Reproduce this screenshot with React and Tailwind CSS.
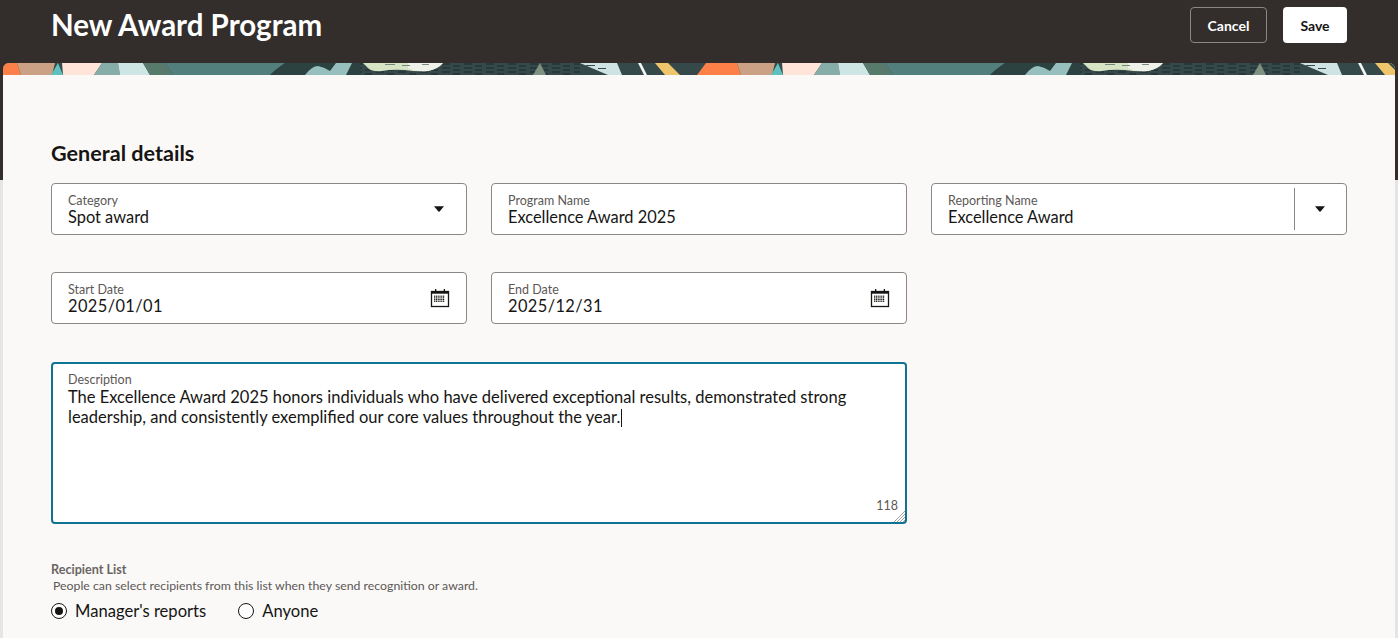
import React from 'react'

const font = 'font-["Lato",sans-serif]'

function BannerTile() {
    return (
        <g>
            <rect x="0" y="0" width="720" height="12" fill="#35494a" />
            <polygon points="-23,12 -14,0 17,0 21,12" fill="#fc8047" />
            <polygon points="17,0 55,0 52,12 21,12" fill="#cba185" />
            <polygon points="58,0 51,12 63,12" fill="#5fc1be" />
            <polygon points="62,0 102,0 94,12 63,12" fill="#ffe4d9" />
            <path d="M102 0 L118 0 L120 12 L94 12 Z" fill="#87ada9" />
            <path d="M118 0 L143 0 L150 12 L120 12 Z" fill="#cde6e3" />
            <path d="M143 0 L165 0 L173 12 L150 12 Z" fill="#587a6d" />
            <path d="M165 0 L285 0 Q276 6 270 12 L173 12 Z" fill="#527e7b" />
            <path d="M285 0 L360 0 L360 12 L270 12 Q276 6 285 0 Z" fill="#2b4240" />
            <path d="M305 12 Q312 3 318 3 Q324 4 330 8 L336 0 L352 0 L346 12 Z" fill="#97bfbd" />
            <rect x="360" y="0" width="220" height="12" fill="url(#dashes)" />
            <path d="M363 0 L443 0 Q438 6 428 8 Q416 9 405 7 Q392 6 382 8 Q372 9 368 5 Z" fill="#d6e4c5" />
            <path d="M408 0 L443 0 Q438 6 428 8 Q416 9 408 5 Z" fill="#eef2ea" />
            <rect x="385" y="1" width="10" height="1" fill="#6f8a78" />
            <rect x="402" y="2" width="8" height="1" fill="#6f8a78" />
            <rect x="422" y="1" width="7" height="1" fill="#7c8a80" />
            <polygon points="540,0 533,12 546,12" fill="#7f9180" />
            <polygon points="580,0 617,0 622,12 608,12" fill="#cfe4e2" />
            <rect x="586" y="2" width="9" height="1" fill="#35494a" />
            <rect x="598" y="5" width="8" height="1" fill="#35494a" />
            <polygon points="638,0 641,0 647,12 644,12" fill="#f4f5f0" />
            <polygon points="655,0 668,0 680,12 665,12" fill="#efc56b" />
        </g>
    )
}

function Banner() {
    return (
        <svg width="1392" height="12" viewBox="0 0 1392 12" className="block">
            <defs>
                <pattern id="dashes" width="22" height="4" patternUnits="userSpaceOnUse">
                    <rect x="0" y="0" width="22" height="4" fill="#35494a" />
                    <rect x="2" y="0.5" width="8" height="1" fill="#18282a" />
                    <rect x="13" y="2.5" width="7" height="1" fill="#18282a" />
                </pattern>
                <g id="tile"><BannerTile /></g>
            </defs>
            <use href="#tile" x="-3" />
            <use href="#tile" x="717" />
        </svg>
    )
}

function Caret() {
    return (
        <svg width="10" height="6" viewBox="0 0 10 6" className="block shrink-0">
            <path d="M0 0.3 H10 L5.6 5.4 Q5 6 4.4 5.4 Z" fill="#161513" />
        </svg>
    )
}

function CalendarIcon() {
    const cells = []
    for (let r = 0; r < 4; r++) {
        for (let c = 0; c < 6; c++) {
            cells.push(<rect key={`${r}-${c}`} x={4 + c * 1.8} y={7.6 + r * 1.7} width="1.2" height="1.2" fill="#161513" />)
        }
    }
    return (
        <svg width="20" height="20" viewBox="0 0 20 20" className="block shrink-0">
            <rect x="1.5" y="3.5" width="17" height="15" fill="none" stroke="#161513" strokeWidth="1.3" />
            <rect x="1.5" y="3.5" width="17" height="2.2" fill="#161513" />
            <rect x="5" y="1" width="1.3" height="4" fill="#161513" />
            <rect x="13.7" y="1" width="1.3" height="4" fill="#161513" />
            {cells}
        </svg>
    )
}

function Field({ label, value, children, digits }) {
    return (
        <div className="flex h-[52px] items-center rounded-[4px] border border-[#8b8785] bg-white pl-4">
            <div className="min-w-0 flex-1 self-start pt-[10px]">
                <div className="h-[13px] text-[12.5px] leading-[14px] text-[#5c5856]">{label}</div>
                <div className={`text-[16.4px] leading-[19px] text-[#161513] ${digits ? 'tracking-[0.4px]' : ''}`}>{value}</div>
            </div>
            {children}
        </div>
    )
}

function Radio({ label, checked }) {
    return (
        <div className="flex items-center gap-2">
            <span className="flex size-4 items-center justify-center rounded-full border border-[#161513] bg-white">
                {checked && <span className="size-2 rounded-full bg-[#161513]" />}
            </span>
            <span className="text-[16.6px] leading-5 text-[#161513]">{label}</span>
        </div>
    )
}

export default function App() {
    return (
        <div className={`h-screen overflow-hidden bg-[linear-gradient(#332e2b_180px,#e6e5e3_180px)] px-[3px] ${font}`}>
            {/* Header */}
            <div className="flex h-[63px] items-start justify-between pl-12 pr-12">
                <h1 className="mt-[5px] text-[29.5px] leading-10 font-bold text-white">New Award Program</h1>
                <div className="mt-[7px] flex gap-4">
                    <button className="h-9 w-[77px] rounded-[4px] border border-[#8b8785] text-[14px] font-bold text-white">Cancel</button>
                    <button className="h-9 w-16 rounded-[4px] bg-white text-[14px] font-bold text-[#161513]">Save</button>
                </div>
            </div>

            {/* Card */}
            <div className="h-[575px] overflow-hidden rounded-t-md bg-[#faf9f7]">
                <Banner />
                <div className="px-12 pt-[63px]">
                    <h2 className="text-[21.6px] leading-[30px] font-bold text-[#161513]">General details</h2>

                    <div className="mt-[15px] grid grid-cols-3 gap-x-6 gap-y-[37px]">
                        <Field label="Category" value="Spot award">
                            <span className="mr-[22px]"><Caret /></span>
                        </Field>
                        <Field label="Program Name" value="Excellence Award 2025" />
                        <Field label="Reporting Name" value="Excellence Award">
                            <span className="h-[42px] w-px bg-[#8b8785]" />
                            <span className="mr-[21px] ml-5"><Caret /></span>
                        </Field>
                        <Field label="Start Date" value="2025/01/01" digits>
                            <span className="mr-4"><CalendarIcon /></span>
                        </Field>
                        <Field label="End Date" value="2025/12/31" digits>
                            <span className="mr-4"><CalendarIcon /></span>
                        </Field>
                    </div>

                    {/* Description */}
                    <div className="relative mt-[38px] h-[162px] w-[856px] rounded-[4px] border-2 border-[#0f7391] bg-white px-[15px] pt-[9px]">
                        <div className="h-[14px] text-[12.5px] leading-[14px] text-[#5c5856]">Description</div>
                        <p className="text-[16.5px] leading-5 text-[#161513]">
                            The Excellence Award 2025 honors individuals who have delivered exceptional results, demonstrated strong leadership, and consistently exemplified our core values throughout the year.<span className="ml-px inline-block h-[18px] w-px bg-[#161513] align-[-4px]" />
                        </p>
                        <span className="absolute right-[7px] bottom-[9px] text-[12.5px] leading-[14px] text-[#5c5856]">118</span>
                        <svg width="11" height="11" viewBox="0 0 11 11" className="absolute right-0 bottom-0">
                            <path d="M0 11 L11 0 M3 11 L11 3 M6 11 L11 6 M9 11 L11 9" stroke="#8b8785" strokeWidth="0.8" />
                        </svg>
                    </div>

                    {/* Recipient list */}
                    <div className="mt-[38px] text-[12.6px] leading-4 font-bold text-[#6a6664]">Recipient List</div>
                    <div className="pl-[2px] text-[12.3px] leading-4 text-[#5c5856]">People can select recipients from this list when they send recognition or award.</div>
                    <div className="mt-[7px] flex gap-8">
                        <Radio label="Manager's reports" checked />
                        <Radio label="Anyone" />
                    </div>
                </div>
            </div>
        </div>
    )
}
